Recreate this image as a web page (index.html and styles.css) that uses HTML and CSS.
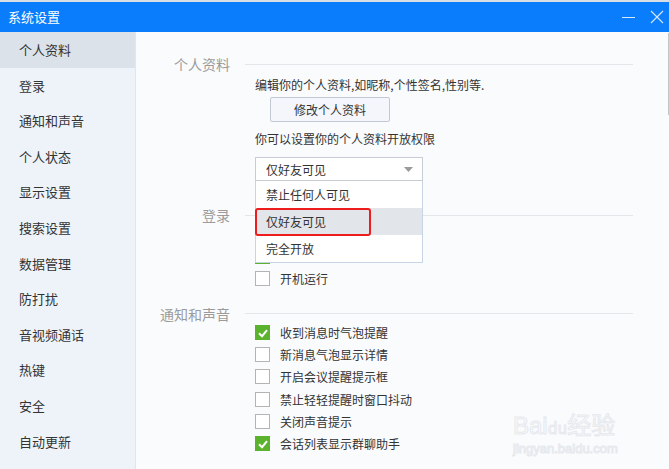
FILE: index.html
```html
<!DOCTYPE html>
<html lang="zh-CN">
<head>
    <meta charset="UTF-8">
    <meta name="viewport" content="width=device-width, initial-scale=1.0">
    <title>系统设置</title>
    <link rel="stylesheet" href="styles.css">
</head>
<body>
    <div class="window">
        <div class="titlebar">
            <span class="title">系统设置</span>
            <div class="controls">
                <svg class="ctl" width="14" height="14" viewBox="0 0 14 14"><line x1="0" y1="7.5" x2="13" y2="7.5" stroke="#d6e8ff" stroke-width="1"/></svg>
                <svg class="ctl" width="14" height="14" viewBox="0 0 14 14"><line x1="1" y1="1" x2="13" y2="13" stroke="#d6e8ff" stroke-width="1.1"/><line x1="13" y1="1" x2="1" y2="13" stroke="#d6e8ff" stroke-width="1.1"/></svg>
            </div>
        </div>
        <div class="body">
            <ul class="sidebar">
                <li class="active">个人资料</li>
                <li>登录</li>
                <li>通知和声音</li>
                <li>个人状态</li>
                <li>显示设置</li>
                <li>搜索设置</li>
                <li>数据管理</li>
                <li>防打扰</li>
                <li>音视频通话</li>
                <li>热键</li>
                <li>安全</li>
                <li>自动更新</li>
            </ul>
            <div class="main">
                <div class="section-head head-profile">
                    <span class="section-label">个人资料</span>
                    <span class="section-line"></span>
                </div>
                <div class="content">
                    <p class="txt">编辑你的个人资料,如昵称,个性签名,性别等.</p>
                    <button class="btn">修改个人资料</button>
                    <p class="txt txt2">你可以设置你的个人资料开放权限</p>
                    <div class="select-wrap">
                        <div class="select">
                            <span>仅好友可见</span>
                            <svg width="9" height="5" viewBox="0 0 9 5"><polygon points="0,0 9,0 4.5,5" fill="#9a9a9a"/></svg>
                        </div>
                        <ul class="dropdown">
                            <li>禁止任何人可见</li>
                            <li class="hover">仅好友可见</li>
                            <li>完全开放</li>
                            <span class="mark"></span>
                        </ul>
                    </div>
                </div>

                <div class="section-head head-login">
                    <span class="section-label">登录</span>
                    <span class="section-line"></span>
                </div>
                <div class="content rows">
                    <div class="row"><span class="box on"><svg width="14" height="14" viewBox="0 0 14 14"><polyline points="3,7.3 6,10.2 11,4.2" fill="none" stroke="#fff" stroke-width="2"/></svg></span></div>
                    <div class="row"><span class="box on"><svg width="14" height="14" viewBox="0 0 14 14"><polyline points="3,7.3 6,10.2 11,4.2" fill="none" stroke="#fff" stroke-width="2"/></svg></span></div>
                    <label class="row"><span class="box"></span>开机运行</label>
                </div>

                <div class="section-head head-notify">
                    <span class="section-label">通知和声音</span>
                    <span class="section-line"></span>
                </div>
                <div class="content rows notify">
                    <label class="row"><span class="box on"><svg width="14" height="14" viewBox="0 0 14 14"><polyline points="3,7.3 6,10.2 11,4.2" fill="none" stroke="#fff" stroke-width="2"/></svg></span>收到消息时气泡提醒</label>
                    <label class="row"><span class="box"></span>新消息气泡显示详情</label>
                    <label class="row"><span class="box"></span>开启会议提醒提示框</label>
                    <label class="row"><span class="box"></span>禁止轻轻提醒时窗口抖动</label>
                    <label class="row"><span class="box"></span>关闭声音提示</label>
                    <label class="row"><span class="box on"><svg width="14" height="14" viewBox="0 0 14 14"><polyline points="3,7.3 6,10.2 11,4.2" fill="none" stroke="#fff" stroke-width="2"/></svg></span>会话列表显示群聊助手</label>
                </div>

                <div class="scroll-thumb"></div>
                <div class="watermark">
                    <span class="wm-big">Bai<span class="wm-du">du</span>经验</span>
                    <span class="wm-small">jingyan.baidu.com</span>
                </div>
            </div>
        </div>
    </div>
</body>
</html>
```

FILE: styles.css
```css
*{
    margin: 0;
    padding: 0;
    box-sizing: border-box;
    font-family: "Noto Sans CJK SC", "Microsoft YaHei", sans-serif;
}
body{
    width: 669px;
    height: 469px;
    overflow: hidden;
    background-color: #d9dee4;
}
.window{
    margin-top: 2px;
    height: 467px;
    display: flex;
    flex-direction: column;
}
.titlebar{
    height: 30px;
    background-color: #0a7dfd;
    display: flex;
    align-items: center;
    justify-content: space-between;
    padding: 0 5px 0 8px;
}
.title{
    color: #fff;
    font-size: 13px;
    line-height: 16px;
}
.controls{
    display: flex;
    gap: 14px;
    margin-top: -1px;
}
.body{
    flex: 1;
    display: flex;
    overflow: hidden;
}
.sidebar{
    width: 136px;
    list-style: none;
    background-color: #eef3fa;
    border-right: 1px solid #e1e6ed;
}
.sidebar li{
    height: 35.6px;
    line-height: 35.6px;
    padding-left: 19px;
    font-size: 13px;
    color: #333;
}
.sidebar li.active{
    background-color: #dbe2ea;
}
.main{
    flex: 1;
    position: relative;
    background-color: #fafbfd;
    padding: 24px 36px 0 0;
}
.section-head{
    height: 16px;
    display: flex;
    align-items: center;
}
.section-label{
    width: 94px;
    text-align: right;
    font-size: 14px;
    line-height: 16px;
    color: #9b9b9b;
}
.section-line{
    flex: 1;
    height: 1px;
    margin-left: 15px;
    background-color: #e3e6ea;
}
.head-login{
    margin-top: 26px;
}
.head-notify{
    margin-top: 16.5px;
}
.content{
    margin-left: 119px;
}
.txt{
    font-size: 12px;
    line-height: 18px;
    color: #333;
    margin-top: 4px;
}
.txt2{
    margin-top: 8px;
}
.btn{
    display: block;
    margin: 3px 0 0 15px;
    width: 120px;
    height: 25px;
    border: 1px solid #c3c9d4;
    border-radius: 2px;
    background-color: #f4f6fb;
    font-size: 12px;
    color: #333;
}
.select-wrap{
    position: relative;
    width: 168px;
    margin-top: 9px;
    z-index: 2;
}
.select{
    height: 24px;
    border: 1px solid #c8cdd5;
    background-color: #fff;
    display: flex;
    align-items: center;
    justify-content: space-between;
    padding: 0 9px 0 10px;
    font-size: 12px;
    color: #333;
}
.dropdown{
    position: absolute;
    top: 24px;
    left: 0;
    width: 168px;
    list-style: none;
    background-color: #fff;
    border: 1px solid #c6d4e3;
    border-top: none;
}
.dropdown li{
    height: 27px;
    line-height: 27px;
    padding-left: 10px;
    font-size: 12px;
    color: #333;
}
.dropdown li.hover{
    background-color: #e2e5e9;
}
.mark{
    position: absolute;
    left: -1px;
    top: 27px;
    width: 116px;
    height: 28px;
    border: 2px solid #ee1d1d;
    border-radius: 3px;
}
.rows{
    display: flex;
    flex-direction: column;
}
.row{
    height: 22px;
    display: flex;
    align-items: center;
    font-size: 12px;
    color: #333;
}
.notify .row{
    height: 22.2px;
}
.box{
    width: 15px;
    height: 15px;
    margin-right: 10px;
    border: 1px solid #b4b4b4;
    background-color: #fff;
    display: flex;
    align-items: center;
    justify-content: center;
}
.box.on{
    border: none;
    background-color: #5bb22c;
}
.scroll-thumb{
    position: absolute;
    top: 1px;
    right: 0;
    width: 1px;
    height: 82px;
    background-color: #c5c5c5;
}
.watermark{
    position: absolute;
    left: 377px;
    top: 380px;
    display: flex;
    flex-direction: column;
    font-family: "Liberation Sans", sans-serif;
    color: #fafbfd;
    -webkit-text-stroke: 1px #e6e9ed;
}
.wm-big{
    font-size: 24px;
    line-height: 28px;
    font-family: "Liberation Sans", "Noto Sans CJK SC", sans-serif;
}
.wm-du{
    font-size: 16px;
}
.wm-small{
    font-size: 13px;
    line-height: 16px;
    font-family: "Liberation Sans", sans-serif;
}
```
